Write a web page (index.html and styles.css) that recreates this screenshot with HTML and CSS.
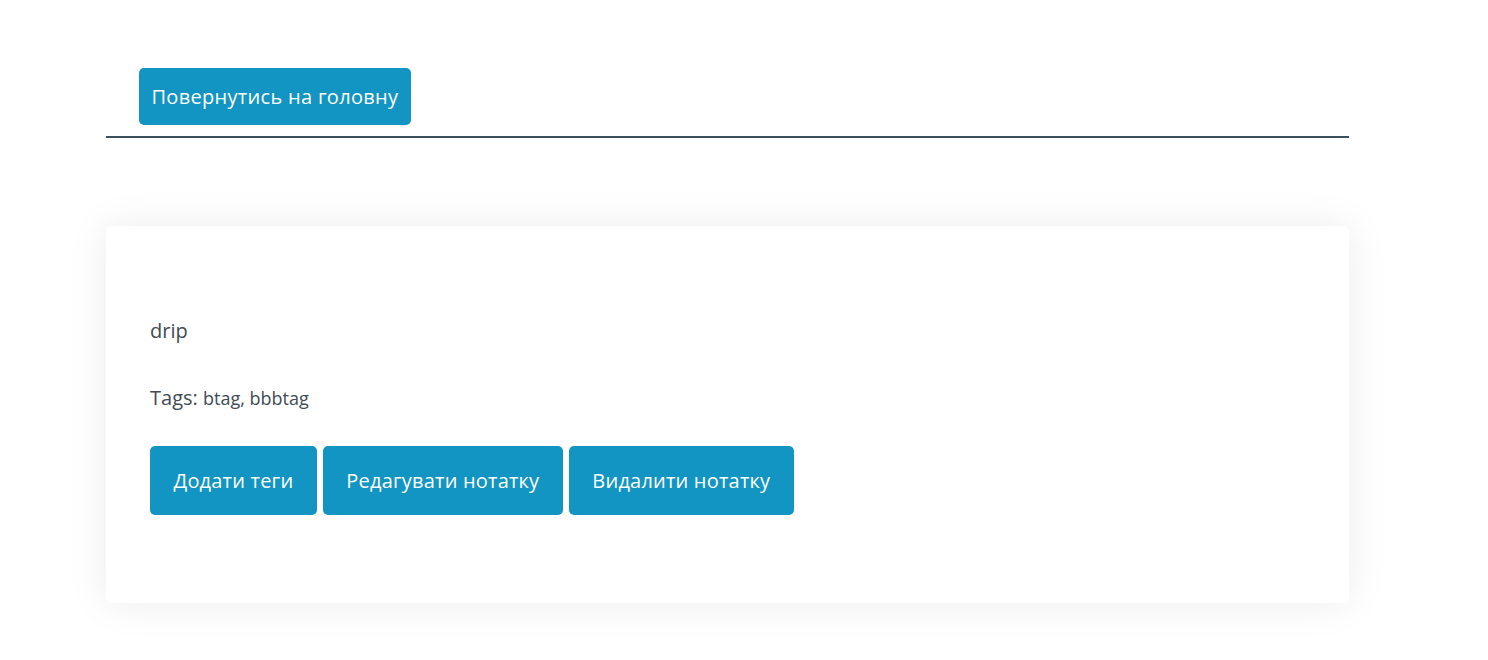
FILE: index.html
```html
<!DOCTYPE html>
<html lang="uk">
<head>
<meta charset="utf-8">
<link rel="stylesheet" href="styles.css">
</head>
<body>
<div class="page">
  <header class="top">
    <button class="btn btn-back">Повернутись на головну</button>
  </header>
  <section class="card">
    <p class="title">drip</p>
    <p class="tags">Tags: <span class="tag-list">btag, bbbtag</span></p>
    <div class="actions">
      <button class="btn btn-big">Додати теги</button>
      <button class="btn btn-big">Редагувати нотатку</button>
      <button class="btn btn-big">Видалити нотатку</button>
    </div>
  </section>
</div>
</body>
</html>
```
FILE: styles.css
```css
html, body {
  margin: 0;
  padding: 0;
  background: #ffffff;
}
body {
  font-family: "Open Sans", "Noto Sans", sans-serif;
  color: #414b54;
}
.page {
  width: 1243px;
  margin-left: 106px;
  padding-top: 68px;
  padding-bottom: 57px;
}
.top {
  padding-left: 33px;
  padding-bottom: 11px;
  border-bottom: 2px solid #3e4f5b;
}
.btn {
  font-family: inherit;
  background: #1295c2;
  color: #ffffff;
  border: none;
  border-radius: 5px;
  cursor: pointer;
}
.btn-back {
  height: 57px;
  padding: 0 12.5px;
  font-size: 20px;
  letter-spacing: 0.3px;
}
.card {
  margin-top: 88px;
  height: 377px;
  box-sizing: border-box;
  padding: 91px 44px 0;
  background: #ffffff;
  border-radius: 6px;
  box-shadow: 0 0 40px rgba(0, 0, 0, 0.08);
}
.title {
  margin: 0;
  font-size: 20px;
  line-height: 28px;
}
.tags {
  margin: 39px 0 0;
  font-size: 20px;
  line-height: 28px;
}
.tag-list {
  font-size: 18px;
}
.actions {
  margin-top: 34px;
  display: flex;
  gap: 6px;
}
.btn-big {
  height: 69px;
  padding: 0 23.5px;
  font-size: 20px;
  letter-spacing: 0.2px;
}
```
